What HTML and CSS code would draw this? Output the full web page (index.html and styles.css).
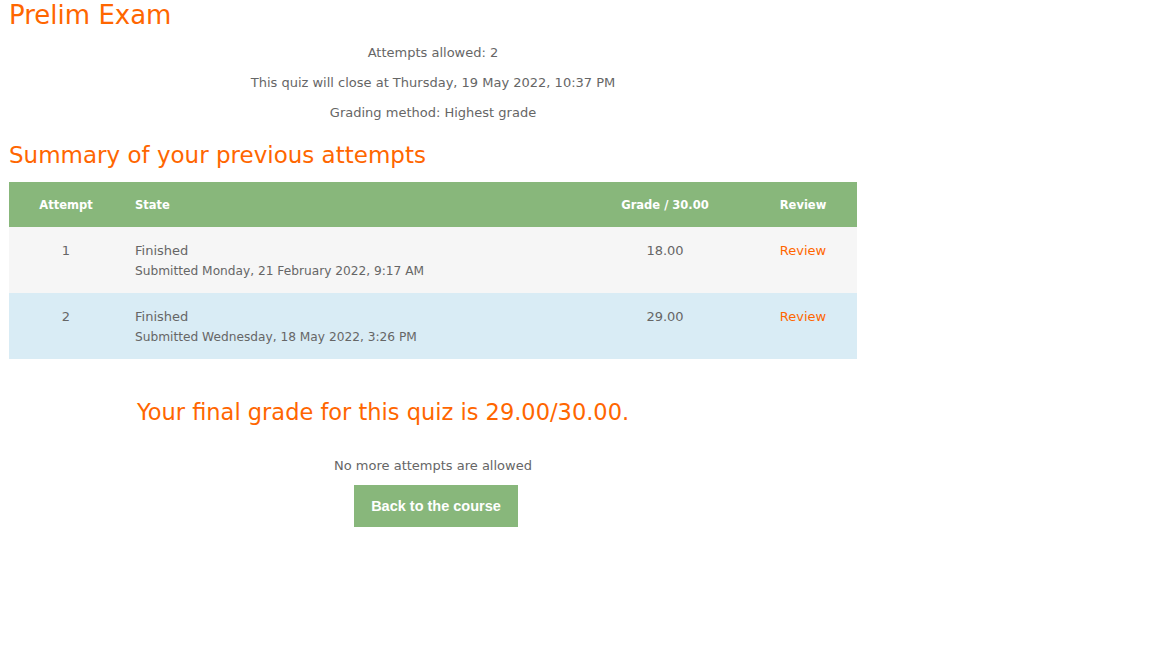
FILE: index.html
```html
<!DOCTYPE html>
<html>
<head>
<meta charset="utf-8">
<link rel="stylesheet" href="styles.css">
</head>
<body>
<div class="page">
  <h2 class="title">Prelim Exam</h2>
  <div class="info">
    <p>Attempts allowed: 2</p>
    <p>This quiz will close at Thursday, 19 May 2022, 10:37 PM</p>
    <p>Grading method: Highest grade</p>
  </div>
  <h3 class="summary">Summary of your previous attempts</h3>
  <table class="attempts">
    <thead>
      <tr>
        <th class="c-attempt">Attempt</th>
        <th class="c-state">State</th>
        <th class="c-grade">Grade / 30.00</th>
        <th class="c-review">Review</th>
      </tr>
    </thead>
    <tbody>
      <tr class="odd">
        <td class="c-attempt">1</td>
        <td class="c-state">Finished<span class="sub">Submitted Monday, 21 February 2022, 9:17 AM</span></td>
        <td class="c-grade">18.00</td>
        <td class="c-review"><a href="#">Review</a></td>
      </tr>
      <tr class="even">
        <td class="c-attempt">2</td>
        <td class="c-state">Finished<span class="sub">Submitted Wednesday, 18 May 2022, 3:26 PM</span></td>
        <td class="c-grade">29.00</td>
        <td class="c-review"><a href="#">Review</a></td>
      </tr>
    </tbody>
  </table>
  <h3 class="final">Your final grade for this quiz is 29.00/30.00.</h3>
  <div class="actions">
    <p>No more attempts are allowed</p>
    <button class="btn">Back to the course</button>
  </div>
</div>
</body>
</html>
```

FILE: styles.css
```css
html, body {
  margin: 0;
  padding: 0;
  background: #fff;
}
body {
  font-family: "DejaVu Sans", sans-serif;
  color: #666;
}
.page {
  width: 848px;
  padding: 0 9px;
}
.title {
  margin: 0;
  font-size: 26px;
  font-weight: normal;
  line-height: 30px;
  color: #f60;
}
.info {
  margin-top: 8px;
  text-align: center;
  font-size: 13px;
}
.info p {
  margin: 0;
  line-height: 30px;
}
.summary {
  margin: 12px 0 0;
  font-size: 23px;
  font-weight: normal;
  line-height: 30px;
  color: #f60;
}
.attempts {
  margin-top: 12px;
  width: 848px;
  border-collapse: collapse;
  table-layout: fixed;
  font-size: 13px;
}
.attempts th {
  background: #88b77b;
  color: #fff;
  font-weight: bold;
  font-size: 11.5px;
  height: 45px;
  padding: 0;
}
.attempts td {
  height: 66px;
  vertical-align: top;
  padding: 15px 0 0;
  box-sizing: border-box;
  line-height: 18px;
}
.attempts tr.odd td { background: #f6f6f6; }
.attempts tr.even td { background: #d9ecf5; }
.attempts .c-attempt { width: 114px; text-align: center; }
.attempts .c-state { text-align: left; padding-left: 12px; }
.attempts .c-grade { width: 168px; text-align: center; }
.attempts .c-review { width: 108px; text-align: center; }
.sub {
  display: block;
  font-size: 12.2px;
  line-height: 22px;
}
.attempts a {
  color: #f60;
  text-decoration: none;
}
.final {
  margin: 38px 0 0;
  padding-left: 128px;
  font-size: 22.5px;
  font-weight: normal;
  line-height: 30px;
  color: #f60;
}
.actions {
  margin-top: 30px;
  text-align: center;
  font-size: 13px;
}
.actions p {
  margin: 0;
  line-height: 18px;
}
.btn {
  margin: 10px 0 0 6px;
  width: 164px;
  height: 42px;
  border: 0;
  background: #88b77b;
  color: #fff;
  font-family: "Liberation Sans", Arial, sans-serif;
  font-weight: bold;
  font-size: 14.5px;
}
```
